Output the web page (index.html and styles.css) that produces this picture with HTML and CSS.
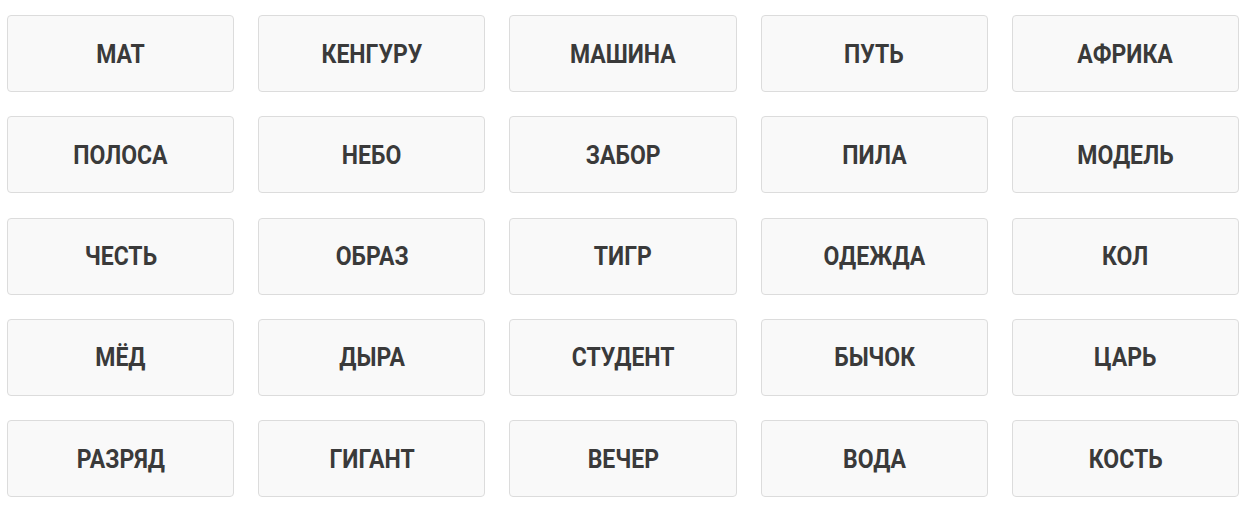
FILE: index.html
```html
<!DOCTYPE html>
<html lang="ru">
<head>
<meta charset="utf-8">
<link rel="stylesheet" href="styles.css">
</head>
<body>
<div class="grid">
  <div class="card"><span class="word">МАТ</span></div>
  <div class="card"><span class="word">КЕНГУРУ</span></div>
  <div class="card"><span class="word">МАШИНА</span></div>
  <div class="card"><span class="word">ПУТЬ</span></div>
  <div class="card"><span class="word">АФРИКА</span></div>
  <div class="card"><span class="word">ПОЛОСА</span></div>
  <div class="card"><span class="word">НЕБО</span></div>
  <div class="card"><span class="word">ЗАБОР</span></div>
  <div class="card"><span class="word">ПИЛА</span></div>
  <div class="card"><span class="word">МОДЕЛЬ</span></div>
  <div class="card"><span class="word">ЧЕСТЬ</span></div>
  <div class="card"><span class="word">ОБРАЗ</span></div>
  <div class="card"><span class="word">ТИГР</span></div>
  <div class="card"><span class="word">ОДЕЖДА</span></div>
  <div class="card"><span class="word">КОЛ</span></div>
  <div class="card"><span class="word">МЁД</span></div>
  <div class="card"><span class="word">ДЫРА</span></div>
  <div class="card"><span class="word">СТУДЕНТ</span></div>
  <div class="card"><span class="word">БЫЧОК</span></div>
  <div class="card"><span class="word">ЦАРЬ</span></div>
  <div class="card"><span class="word">РАЗРЯД</span></div>
  <div class="card"><span class="word">ГИГАНТ</span></div>
  <div class="card"><span class="word">ВЕЧЕР</span></div>
  <div class="card"><span class="word">ВОДА</span></div>
  <div class="card"><span class="word">КОСТЬ</span></div>
</div>
</body>
</html>
```

FILE: styles.css
```css
html, body {
  margin: 0;
  padding: 0;
  background: #ffffff;
}
body {
  font-family: Roboto, "Liberation Sans", sans-serif;
}
.grid {
  display: grid;
  grid-template-columns: repeat(5, 1fr);
  column-gap: 24px;
  row-gap: 24.25px;
  padding: 15px 11px 0 7px;
}
.card {
  height: 77px;
  box-sizing: border-box;
  border: 1px solid #dcdcdc;
  border-radius: 4px;
  background: #f9f9f9;
  display: flex;
  align-items: center;
  justify-content: center;
}
.word {
  display: inline-block;
  font-size: 26px;
  font-weight: 700;
  color: #3a3a3a;
  transform: scaleX(0.885);
  white-space: nowrap;
}
```
